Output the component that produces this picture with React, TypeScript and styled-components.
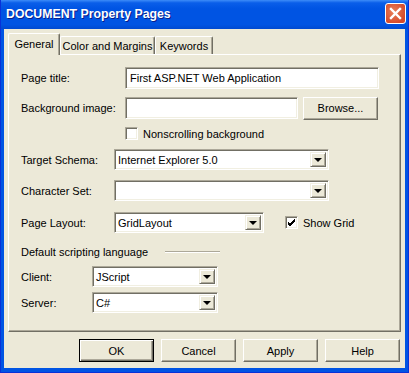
import styled, { createGlobalStyle } from 'styled-components'

const GlobalStyle = createGlobalStyle`
  html, body {
    margin: 0;
    padding: 0;
    background: #ffffff;
  }
  body {
    font-family: "Liberation Sans", Arial, sans-serif;
    font-size: 11px;
    color: #000;
  }
`

const Window = styled.div`
  display: flex;
  flex-direction: column;
  width: 409px;
  height: 373px;
  box-sizing: border-box;
  background: #0054e3;
  border-left: 1px solid #0831d9;
  border-right: 1px solid #0831d9;
  border-bottom: 1px solid #0831d9;
`

const TitleBar = styled.div`
  display: flex;
  align-items: center;
  justify-content: space-between;
  height: 29px;
  padding: 0 2px 0 5px;
  background: linear-gradient(#3d8cf8 0%, #0a5ee9 10%, #0054e3 30%, #0054e3 85%, #0049d0 100%);
`

const TitleText = styled.span`
  color: #fff;
  font-weight: bold;
  font-size: 12.3px;
  text-shadow: 1px 1px 0 #0a1e8a;
  padding-bottom: 1px;
`

const CloseButton = styled.div`
  display: flex;
  align-items: center;
  justify-content: center;
  width: 19px;
  height: 19px;
  margin-bottom: 3px;
  border: 1px solid #fff;
  border-radius: 3px;
  background: radial-gradient(circle at 40% 40%, #e8805a, #d6492a 75%);
`

const Body = styled.div`
  flex: 1;
  display: flex;
  flex-direction: column;
  margin: 0 3px 4px 3px;
  padding: 4px 4px 0 4px;
  background: #ece9d8;
`

const TabStrip = styled.div`
  display: flex;
  align-items: flex-end;
  height: 21px;
`

const Tab = styled.div<{ $active?: boolean; $w: number }>`
  display: flex;
  align-items: center;
  justify-content: center;
  box-sizing: border-box;
  width: ${({ $w }) => $w}px;
  height: ${({ $active }) => ($active ? 22 : 18)}px;
  margin-bottom: ${({ $active }) => ($active ? -1 : 0)}px;
  padding-bottom: ${({ $active }) => ($active ? 2 : 0)}px;
  position: relative;
  z-index: ${({ $active }) => ($active ? 1 : 0)};
  background: #ece9d8;
  border-top: 1px solid #fff;
  border-left: 1px solid #fff;
  border-right: 1px solid #716f64;
  border-radius: 2px 2px 0 0;
  box-shadow: inset -1px 0 0 #aca899;
  white-space: nowrap;
`

const Panel = styled.div`
  display: flex;
  flex-direction: column;
  height: 278px;
  box-sizing: border-box;
  padding-left: 12px;
  border: 1px solid;
  border-color: #fff #716f64 #716f64 #fff;
  box-shadow: inset -1px -1px 0 #aca899;
`

const Row = styled.div<{ $mt: number; $h?: number }>`
  display: flex;
  align-items: center;
  margin-top: ${({ $mt }) => $mt}px;
  height: ${({ $h }) => $h ?? 21}px;
`

const Label = styled.span<{ $w: number }>`
  width: ${({ $w }) => $w}px;
  flex-shrink: 0;
  white-space: nowrap;
`

const Sunken = styled.div<{ $w: number; $h?: number }>`
  display: flex;
  align-items: center;
  box-sizing: border-box;
  width: ${({ $w }) => $w}px;
  height: ${({ $h }) => $h ?? 21}px;
  background: #fff;
  border: 1px solid;
  border-color: #aca899 #fff #fff #aca899;
  box-shadow: inset 1px 1px 0 #716f64, inset -1px -1px 0 #f1efe2;
`

const TextBox = styled(Sunken)`
  padding-left: 4px;
`

const Combo = styled(Sunken)`
  padding: 2px;
  justify-content: space-between;
`

const ComboText = styled.span`
  padding-left: 1px;
`

const DropButton = styled.div`
  display: flex;
  align-items: center;
  justify-content: center;
  box-sizing: border-box;
  width: 16px;
  height: 100%;
  background: #ece9d8;
  border: 1px solid;
  border-color: #f1efe2 #716f64 #716f64 #f1efe2;
  box-shadow: inset 1px 1px 0 #fff, inset -1px -1px 0 #aca899;
`

const Arrow = styled.span`
  width: 0;
  height: 0;
  border-left: 4px solid transparent;
  border-right: 4px solid transparent;
  border-top: 4px solid #000;
  margin-top: 1px;
`

const PushButton = styled.div<{ $w?: number; $default?: boolean; $ml?: number }>`
  display: flex;
  align-items: center;
  justify-content: center;
  box-sizing: border-box;
  width: ${({ $w }) => $w ?? 75}px;
  height: 23px;
  margin-left: ${({ $ml }) => $ml ?? 0}px;
  background: #ece9d8;
  border: 1px solid;
  border-color: ${({ $default }) => ($default ? '#000' : '#fff #716f64 #716f64 #fff')};
  box-shadow: ${({ $default }) =>
    $default
      ? 'inset 1px 1px 0 #fff, inset -1px -1px 0 #716f64, inset -2px -2px 0 #aca899'
      : 'inset -1px -1px 0 #aca899'};
`

const CheckBox = styled(Sunken)`
  justify-content: center;
  flex-shrink: 0;
`

const CheckLabel = styled.span`
  margin-left: 5px;
  white-space: nowrap;
`

const GroupHeading = styled.div`
  display: flex;
  align-items: center;
  margin-top: 12px;
  height: 13px;
`

const Etched = styled.div`
  width: 55px;
  height: 1px;
  margin-left: 17px;
  background: #aca899;
  border-bottom: 1px solid #fff;
`

const ButtonBar = styled.div`
  display: flex;
  justify-content: flex-end;
  gap: 7px;
  margin-top: 7px;
  padding-right: 1px;
`

function Combobox({ w, value }: { w: number; value?: string }) {
  return (
    <Combo $w={w}>
      <ComboText>{value}</ComboText>
      <DropButton>
        <Arrow />
      </DropButton>
    </Combo>
  )
}

function Check({ checked }: { checked?: boolean }) {
  return (
    <CheckBox $w={13} $h={13}>
      {checked && (
        <svg width="9" height="9" viewBox="0 0 9 9">
          <path d="M1 4 L3 6 L8 1 M1 5 L3 7 L8 2 M1 6 L3 8 L8 3" stroke="#000" strokeWidth="1" fill="none" />
        </svg>
      )}
    </CheckBox>
  )
}

export default function App() {
  return (
    <>
      <GlobalStyle />
      <Window>
        <TitleBar>
          <TitleText>DOCUMENT Property Pages</TitleText>
          <CloseButton>
            <svg width="13" height="13" viewBox="0 0 13 13">
              <path d="M2 2 L11 11 M11 2 L2 11" stroke="#fff" strokeWidth="2.4" strokeLinecap="square" />
            </svg>
          </CloseButton>
        </TitleBar>
        <Body>
          <TabStrip>
            <Tab $active $w={52}>General</Tab>
            <Tab $w={95}>Color and Margins</Tab>
            <Tab $w={58}>Keywords</Tab>
          </TabStrip>
          <Panel>
            <Row $mt={12} $h={22}>
              <Label $w={104}>Page title:</Label>
              <TextBox $w={254} $h={22}>First ASP.NET Web Application</TextBox>
            </Row>
            <Row $mt={8} $h={22}>
              <Label $w={104}>Background image:</Label>
              <TextBox $w={173} $h={22} />
              <PushButton $ml={5}>Browse...</PushButton>
            </Row>
            <Row $mt={8} $h={13}>
              <Label $w={104} />
              <Check />
              <CheckLabel>Nonscrolling background</CheckLabel>
            </Row>
            <Row $mt={9}>
              <Label $w={93}>Target Schema:</Label>
              <Combobox w={215} value="Internet Explorer 5.0" />
            </Row>
            <Row $mt={10}>
              <Label $w={93}>Character Set:</Label>
              <Combobox w={215} />
            </Row>
            <Row $mt={11}>
              <Label $w={93}>Page Layout:</Label>
              <Combobox w={150} value="GridLayout" />
              <Label $w={21} />
              <Check checked />
              <CheckLabel>Show Grid</CheckLabel>
            </Row>
            <GroupHeading>
              Default scripting language
              <Etched />
            </GroupHeading>
            <Row $mt={8}>
              <Label $w={71}>Client:</Label>
              <Combobox w={126} value="JScript" />
            </Row>
            <Row $mt={5}>
              <Label $w={71}>Server:</Label>
              <Combobox w={126} value="C#" />
            </Row>
          </Panel>
          <ButtonBar>
            <PushButton $default>OK</PushButton>
            <PushButton>Cancel</PushButton>
            <PushButton>Apply</PushButton>
            <PushButton>Help</PushButton>
          </ButtonBar>
        </Body>
      </Window>
    </>
  )
}
